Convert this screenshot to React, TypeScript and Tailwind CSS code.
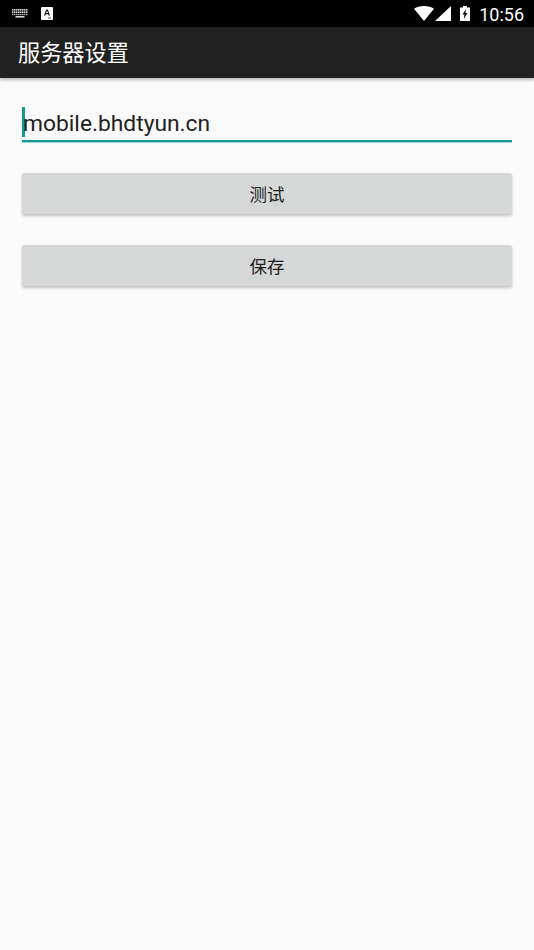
import React from 'react';

const cjk = "font-['Roboto','Noto_Sans_CJK_SC',sans-serif]";

function KeyboardIcon() {
  const keys = [0, 2, 4, 6, 8, 10, 12, 14];
  return (
    <svg width="16" height="9" viewBox="0 0 16 9" fill="#fff">
      {keys.map((x) => (
        <rect key={`a${x}`} x={x} y="0" width="1.5" height="1.6" opacity="0.85" />
      ))}
      {keys.map((x) => (
        <rect key={`b${x}`} x={x} y="2.4" width="1.5" height="1.6" opacity="0.85" />
      ))}
      {keys.map((x) => (
        <rect key={`c${x}`} x={x} y="4.8" width="1.5" height="1.4" opacity="0.7" />
      ))}
      <rect x="3.5" y="7" width="9" height="1.6" opacity="0.85" />
    </svg>
  );
}

function StatusBar() {
  return (
    <div className="flex h-[27px] items-center justify-between bg-black pl-[12px] pr-[10px]">
      <div className="flex items-center gap-[13px]">
        <KeyboardIcon />
        <svg width="12" height="13" viewBox="0 0 12 13">
          <rect width="12" height="13" rx="1" fill="#fff" />
          <path d="M3 8.5 5.2 2.5h1.6L9 8.5H7.6L7.2 7.2H4.8l-.4 1.3zM5.1 6.1h1.8L6 3.6z" fill="#111" />
          <rect x="7" y="10.6" width="3" height="1" fill="#555" />
        </svg>
      </div>
      <div className="flex items-center">
        <svg width="20" height="15" viewBox="0 0 20 15" fill="#fff">
          <path d="M0 2.7C2.8 1 6.2 0 10 0s7.2 1 10 2.7L10 15z" />
        </svg>
        <svg width="16" height="15" viewBox="0 0 16 15" fill="#fff" className="ml-[1px]">
          <path d="M16 0v15H0z" />
        </svg>
        <svg width="10" height="15" viewBox="0 0 10 15" className="ml-[9px]">
          <path d="M3 0h4v1.5h3V15H0V1.5h3z" fill="#fff" />
          <path d="M6 3 2.5 8.5h2L3.8 13l3.7-6h-2.1z" fill="#000" />
        </svg>
        <span className="relative top-[1px] ml-[9px] font-['Roboto',sans-serif] text-[18px] leading-none text-white">
          10:56
        </span>
      </div>
    </div>
  );
}

function RaisedButton({ label }: { label: string }) {
  return (
    <button
      className={`h-[41px] w-full rounded-[2px] bg-[#d6d7d7] pt-[3px] text-[17.5px] text-[#1f1f1f] shadow-[0_2px_3px_rgba(0,0,0,0.22)] ${cjk}`}
    >
      {label}
    </button>
  );
}

export default function App() {
  return (
    <div className="flex h-[950px] w-[534px] flex-col bg-[#fafafa]">
      <StatusBar />
      <div className="flex h-[51px] items-center bg-[#212121] pl-[18px] pt-[3px] shadow-[0_2px_3px_rgba(0,0,0,0.25)]">
        <span className={`text-[22.2px] text-white ${cjk}`}>服务器设置</span>
      </div>

      <div className="flex flex-col px-[22px] pt-[29px]">
        <div className="flex h-[35px] items-start border-b-[2px] border-[#149b8c] shadow-[0_1px_0_rgba(20,155,140,0.4)]">
          <div className="h-[30px] w-[3px] shrink-0 bg-[#149b8c]" />
          <span className="-ml-[2px] font-['Roboto',sans-serif] text-[22.8px] leading-[34px] text-[#222222]">
            mobile.bhdtyun.cn
          </span>
        </div>
        <div className="mt-[31px]">
          <RaisedButton label="测试" />
        </div>
        <div className="mt-[31px]">
          <RaisedButton label="保存" />
        </div>
      </div>
    </div>
  );
}
